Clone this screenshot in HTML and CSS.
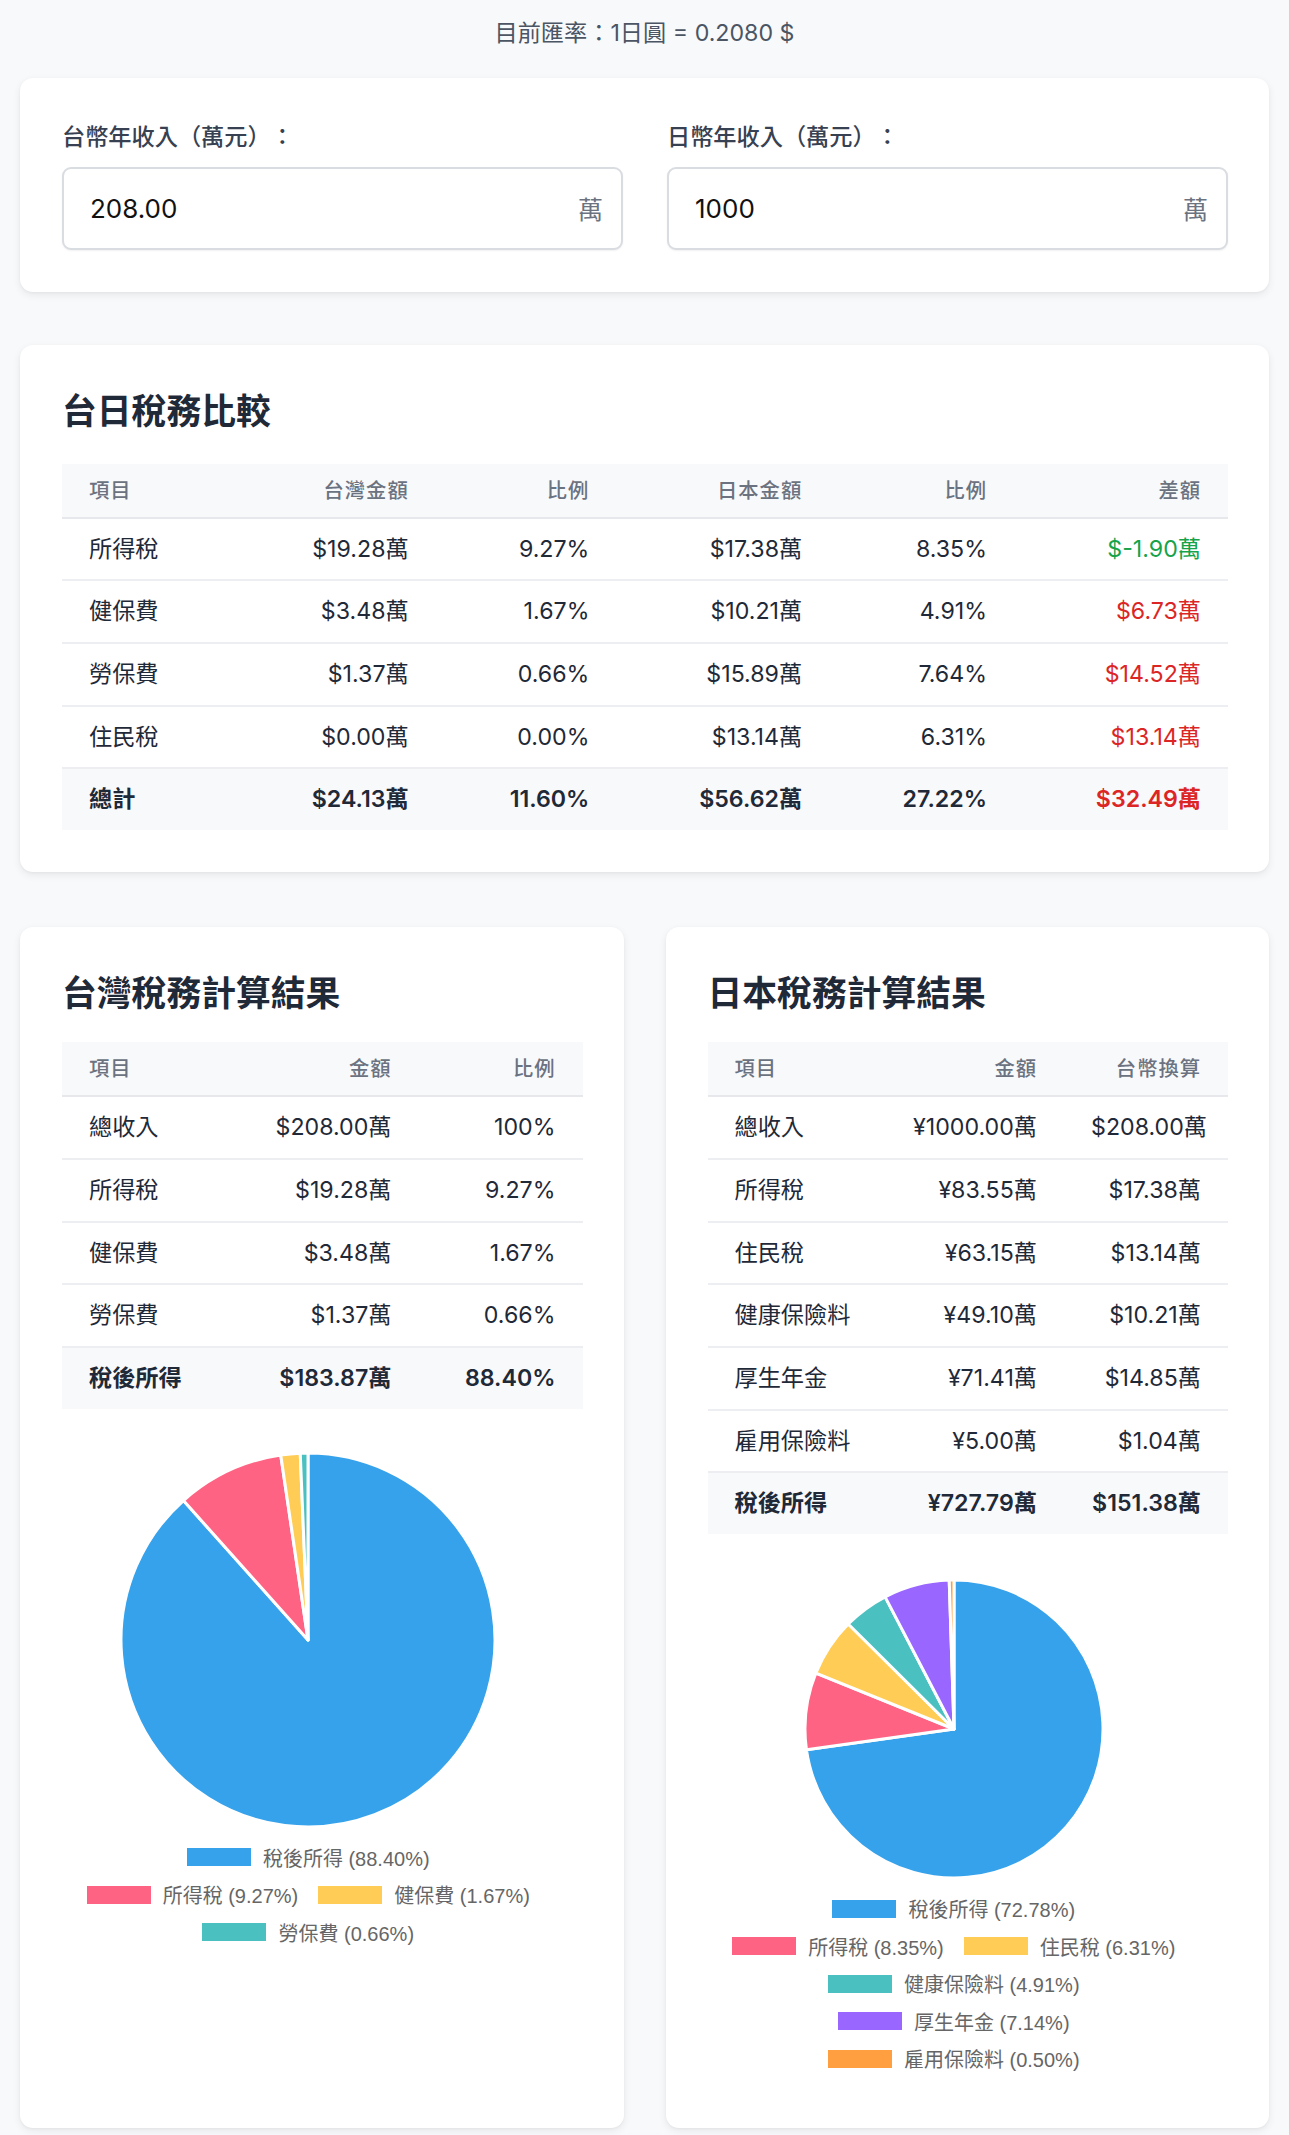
FILE: index.html
```html
<!DOCTYPE html>
<html lang="zh-Hant">
<head>
<meta charset="utf-8">
<title>台日稅務比較</title>
<link rel="stylesheet" href="styles.css">
</head>
<body>
<div class="page">
  <p class="rate">目前匯率：1日圓 = 0.2080 $</p>

  <section class="card inputs">
    <div class="field">
      <label class="label">台幣年收入（萬元）：</label>
      <div class="input-box"><input class="input" type="text" value="208.00"><span class="suffix">萬</span></div>
    </div>
    <div class="field">
      <label class="label">日幣年收入（萬元）：</label>
      <div class="input-box"><input class="input" type="text" value="1000"><span class="suffix">萬</span></div>
    </div>
  </section>

  <section class="card compare">
    <h2 class="title">台日稅務比較</h2>
    <table class="table">
      <colgroup>
        <col class="c-1"><col class="c-2"><col class="c-3"><col class="c-4"><col class="c-5"><col class="c-6">
      </colgroup>
      <thead>
        <tr><th>項目</th><th>台灣金額</th><th>比例</th><th>日本金額</th><th>比例</th><th>差額</th></tr>
      </thead>
      <tbody>
        <tr><td>所得稅</td><td>$19.28萬</td><td>9.27%</td><td>$17.38萬</td><td>8.35%</td><td class="pos">$-1.90萬</td></tr>
        <tr><td>健保費</td><td>$3.48萬</td><td>1.67%</td><td>$10.21萬</td><td>4.91%</td><td class="neg">$6.73萬</td></tr>
        <tr><td>勞保費</td><td>$1.37萬</td><td>0.66%</td><td>$15.89萬</td><td>7.64%</td><td class="neg">$14.52萬</td></tr>
        <tr><td>住民稅</td><td>$0.00萬</td><td>0.00%</td><td>$13.14萬</td><td>6.31%</td><td class="neg">$13.14萬</td></tr>
        <tr class="total"><td>總計</td><td>$24.13萬</td><td>11.60%</td><td>$56.62萬</td><td>27.22%</td><td class="neg">$32.49萬</td></tr>
      </tbody>
    </table>
  </section>

  <div class="results">
    <section class="card result">
      <h2 class="title">台灣稅務計算結果</h2>
      <table class="table">
        <colgroup><col class="r-1"><col class="r-2"><col class="r-3"></colgroup>
        <thead><tr><th>項目</th><th>金額</th><th>比例</th></tr></thead>
        <tbody>
          <tr><td>總收入</td><td>$208.00萬</td><td>100%</td></tr>
          <tr><td>所得稅</td><td>$19.28萬</td><td>9.27%</td></tr>
          <tr><td>健保費</td><td>$3.48萬</td><td>1.67%</td></tr>
          <tr><td>勞保費</td><td>$1.37萬</td><td>0.66%</td></tr>
          <tr class="total"><td>稅後所得</td><td>$183.87萬</td><td>88.40%</td></tr>
        </tbody>
      </table>
      <div class="chart chart-tw">
        <svg class="pie" width="378" height="378" viewBox="-189 -189 378 378">
          <g stroke="#fff" stroke-width="3" stroke-linejoin="round">
            <path fill="#36A2EB" d="M0,0 L0,-187 A187,187 0 1 1 -124.55,-139.49 Z"/>
            <path fill="#FF6384" d="M0,0 L-124.55,-139.49 A187,187 0 0 1 -27.28,-185 Z"/>
            <path fill="#FFCD56" d="M0,0 L-27.28,-185 A187,187 0 0 1 -7.77,-186.84 Z"/>
            <path fill="#4BC0C0" d="M0,0 L-7.77,-186.84 A187,187 0 0 1 0,-187 Z"/>
          </g>
        </svg>
        <div class="legend">
          <div class="legend-row"><span class="item"><i class="box blue"></i>稅後所得 (88.40%)</span></div>
          <div class="legend-row"><span class="item"><i class="box pink"></i>所得稅 (9.27%)</span><span class="item"><i class="box yellow"></i>健保費 (1.67%)</span></div>
          <div class="legend-row"><span class="item"><i class="box teal"></i>勞保費 (0.66%)</span></div>
        </div>
      </div>
    </section>

    <section class="card result">
      <h2 class="title">日本稅務計算結果</h2>
      <table class="table">
        <colgroup><col class="r-1"><col class="r-2"><col class="r-3"></colgroup>
        <thead><tr><th>項目</th><th>金額</th><th>台幣換算</th></tr></thead>
        <tbody>
          <tr><td>總收入</td><td>¥1000.00萬</td><td>$208.00萬</td></tr>
          <tr><td>所得稅</td><td>¥83.55萬</td><td>$17.38萬</td></tr>
          <tr><td>住民稅</td><td>¥63.15萬</td><td>$13.14萬</td></tr>
          <tr><td>健康保險料</td><td>¥49.10萬</td><td>$10.21萬</td></tr>
          <tr><td>厚生年金</td><td>¥71.41萬</td><td>$14.85萬</td></tr>
          <tr><td>雇用保險料</td><td>¥5.00萬</td><td>$1.04萬</td></tr>
          <tr class="total"><td>稅後所得</td><td>¥727.79萬</td><td>$151.38萬</td></tr>
        </tbody>
      </table>
      <div class="chart chart-jp">
        <svg class="pie" width="302" height="302" viewBox="-151 -151 302 302">
          <g stroke="#fff" stroke-width="3" stroke-linejoin="round">
            <path fill="#36A2EB" d="M0,0 L0,-149 A149,149 0 1 1 -147.55,20.71 Z"/>
            <path fill="#FF6384" d="M0,0 L-147.55,20.71 A149,149 0 0 1 -138.08,-55.98 Z"/>
            <path fill="#FFCD56" d="M0,0 L-138.08,-55.98 A149,149 0 0 1 -105.76,-104.95 Z"/>
            <path fill="#4BC0C0" d="M0,0 L-105.76,-104.95 A149,149 0 0 1 -68.89,-132.12 Z"/>
            <path fill="#9966FF" d="M0,0 L-68.89,-132.12 A149,149 0 0 1 -4.78,-148.92 Z"/>
            <path fill="#FF9F40" d="M0,0 L-4.78,-148.92 A149,149 0 0 1 0,-149 Z"/>
          </g>
        </svg>
        <div class="legend">
          <div class="legend-row"><span class="item"><i class="box blue"></i>稅後所得 (72.78%)</span></div>
          <div class="legend-row"><span class="item"><i class="box pink"></i>所得稅 (8.35%)</span><span class="item"><i class="box yellow"></i>住民稅 (6.31%)</span></div>
          <div class="legend-row"><span class="item"><i class="box teal"></i>健康保險料 (4.91%)</span></div>
          <div class="legend-row"><span class="item"><i class="box purple"></i>厚生年金 (7.14%)</span></div>
          <div class="legend-row"><span class="item"><i class="box orange"></i>雇用保險料 (0.50%)</span></div>
        </div>
      </div>
    </section>
  </div>
</div>
</body>
</html>
```

FILE: styles.css
```css
* { box-sizing: border-box; }

html, body {
  margin: 0;
  padding: 0;
  background: #f8f9fb;
}

body {
  font-family: Inter, "Noto Sans CJK TC", sans-serif;
  color: #1f2937;
  text-spacing-trim: space-all;
}

.page {
  padding: 0 20px 8px;
}

.rate {
  margin: 0;
  padding-top: 16px;
  margin-bottom: 27px;
  text-align: center;
  font-size: 23.2px;
  line-height: 34.8px;
  color: #4b5563;
}

.card {
  background: #fff;
  border-radius: 13px;
  box-shadow: 0 3px 9px rgba(0, 0, 0, 0.07), 0 1px 3px rgba(0, 0, 0, 0.04);
  padding: 42px 41px 42px 42px;
}

/* inputs */
.inputs {
  display: grid;
  grid-template-columns: 1fr 1fr;
  column-gap: 44px;
}

.label {
  display: block;
  font-size: 23.2px;
  line-height: 34.8px;
  font-weight: 500;
  color: #374151;
  margin-bottom: 12px;
}

.input-box {
  display: flex;
  align-items: center;
  height: 83px;
  border: 2px solid #d9dce1;
  border-radius: 9px;
  padding: 0 18px 0 26px;
  box-shadow: 0 1px 2px rgba(0, 0, 0, 0.06);
  background: #fff;
}

.input {
  flex: 1;
  min-width: 0;
  border: 0;
  outline: 0;
  padding: 0;
  background: transparent;
  font-family: Inter, "Noto Sans CJK TC", sans-serif;
  font-size: 26px;
  color: #111;
}

.suffix {
  font-size: 25px;
  color: #6b7280;
}

/* titles */
.title {
  margin: 0 0 29px;
  font-size: 34.8px;
  line-height: 48px;
  font-weight: 700;
  color: #1f2937;
}

.result .title {
  margin-bottom: 25px;
}

.compare {
  margin-top: 53px;
}

/* tables */
.table {
  width: 100%;
  border-collapse: collapse;
  table-layout: fixed;
}

.table th {
  background: #f8f9fb;
  font-size: 20.3px;
  line-height: 27px;
  font-weight: 500;
  letter-spacing: 1px;
  color: #6b7280;
  padding: 13px 27px;
  text-align: right;
  border-bottom: 2px solid #e6e8eb;
}

.table td {
  font-size: 23.2px;
  line-height: 34.7px;
  padding: 13px 27px;
  text-align: right;
  color: #1f2937;
  border-bottom: 2px solid #eceef1;
  white-space: nowrap;
}

.table th:first-child,
.table td:first-child {
  text-align: left;
}

.table tr.total td {
  background: #f8f9fb;
  font-weight: 600;
  border-bottom: 0;
}

.table td.pos { color: #16a34a; }
.table td.neg { color: #dc2626; }

.c-1 { width: 13.8%; }
.c-2 { width: 18.25%; }
.c-3 { width: 15.5%; }
.c-4 { width: 18.25%; }
.c-5 { width: 15.85%; }
.c-6 { width: 18.35%; }

.r-1 { width: 33%; }
.r-2 { width: 35.5%; }
.r-3 { width: 31.5%; }

/* results */
.results {
  margin-top: 55px;
  display: grid;
  grid-template-columns: 1fr 1fr;
  column-gap: 42px;
  align-items: stretch;
}

.result {
  padding-bottom: 42px;
}

.chart {
  height: 552px;
  margin-right: 28px;
  display: flex;
  flex-direction: column;
  align-items: center;
}

.chart-tw { padding-top: 42px; }
.chart-jp { padding-top: 44px; }

.pie {
  display: block;
  flex: none;
}

.legend {
  margin-top: 10px;
  font-family: "Liberation Sans", "Noto Sans CJK TC", sans-serif;
  font-size: 20px;
  color: #666;
}

.legend-row {
  display: flex;
  justify-content: center;
  gap: 20px;
  height: 37.5px;
  align-items: center;
}

.item {
  display: inline-flex;
  align-items: center;
  gap: 12px;
  white-space: nowrap;
}

.box {
  display: inline-block;
  width: 64px;
  height: 18px;
}

.blue { background: #36A2EB; }
.pink { background: #FF6384; }
.yellow { background: #FFCD56; }
.teal { background: #4BC0C0; }
.purple { background: #9966FF; }
.orange { background: #FF9F40; }
```
